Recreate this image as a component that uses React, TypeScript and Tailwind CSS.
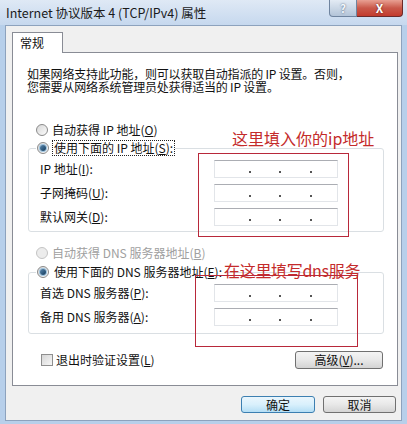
import React from "react";

const F = "font-['Noto_Sans_CJK_SC','Microsoft_YaHei',sans-serif]";

function Radio({ checked, disabled }: { checked?: boolean; disabled?: boolean }) {
  return (
    <span
      className={`inline-flex w-[12px] h-[12px] shrink-0 rounded-full border items-center justify-center ${
        disabled ? "border-[#c4c4c4] bg-[#ececec]" : "border-[#8a8a8a] bg-linear-to-br from-[#d8d8d8] to-[#fbfbfb]"
      }`}
    >
      {checked && (
        <span className="w-[6px] h-[6px] rounded-full bg-linear-to-br from-[#5c8ab0] to-[#0f3a5c] ring-1 ring-[#9cc3df]" />
      )}
    </span>
  );
}

function U({ c }: { c: string }) {
  return <span className="underline underline-offset-1">{c}</span>;
}

function IpBox() {
  return (
    <div className="w-[124px] h-[18px] bg-white border border-[#e2e5e9] border-t-[#abadb3] flex items-end pb-[4px]">
      <span className="w-[34px]" />
      <span className="w-[2px] h-[2px] bg-[#555]" />
      <span className="w-[28px]" />
      <span className="w-[2px] h-[2px] bg-[#555]" />
      <span className="w-[29px]" />
      <span className="w-[2px] h-[2px] bg-[#555]" />
    </div>
  );
}

function Row({ label, children }: { label: React.ReactNode; children?: React.ReactNode }) {
  return (
    <div className="flex items-center h-[18px]">
      <span className="w-[174px] text-[12px] leading-[14px] text-[#111]">{label}</span>
      {children}
    </div>
  );
}

export default function App() {
  return (
    <div className={`relative w-[407px] h-[424px] bg-[#b7cfea] flex flex-col overflow-hidden ${F}`}>
      {/* title bar */}
      <div className="h-[25px] flex justify-between items-start bg-linear-to-b from-[#dfe9f5] to-[#c6d8ee]">
        <span className="pl-[6px] pt-[4px] text-[12.5px] leading-[17px] text-[#1a1a1a]">
          Internet 协议版本 4 (TCP/IPv4) 属性
        </span>
        <div className="flex mr-[4px]">
          <div className="w-[28px] h-[17px] rounded-bl-[4px] border border-t-0 border-[#6f849f] bg-linear-to-b from-[#e3ebf4] to-[#b3c4d8] flex items-center justify-center text-[11px] leading-[12px] font-bold text-[#f4f8fc] [text-shadow:0_0_2px_#44566e]">
            ?
          </div>
          <div className="w-[46px] h-[17px] rounded-br-[4px] border border-t-0 border-l-0 border-[#6b2a2a] bg-linear-to-b from-[#e8a093] via-[#c9584a] to-[#c23a2c] flex items-center justify-center text-[12px] leading-[12px] font-bold text-white [text-shadow:0_0_2px_#5a1a12]">
            X
          </div>
        </div>
      </div>

      {/* client area */}
      <div className="mx-[5px] h-[396px] bg-[#f0f0f0] border border-[#8da2bd] flex flex-col">
        {/* tab */}
        <div className="pt-[6px] pl-[6px]">
          <div className="relative z-10 -mb-px w-[51px] h-[21px] bg-white border border-b-0 border-[#898c95] flex items-center pl-[7px] text-[12px] leading-[14px] text-[#111]">
            常规
          </div>
        </div>
        {/* panel */}
        <div className="ml-[6px] w-[386px] h-[334px] bg-white border border-[#898c95] flex flex-col pl-[15px] text-[12px] text-[#111]">
          <p className="mt-[14px] ml-[-1px] leading-[13px] tracking-[-0.2px] text-[12px]">
            如果网络支持此功能，则可以获取自动指派的 IP 设置。否则，
            <br />
            您需要从网络系统管理员处获得适当的 IP 设置。
          </p>

          <div className="mt-[29px] h-[16px] flex items-center gap-[4px] pl-[8px]">
            <Radio />
            <span className="leading-[14px]">
              自动获得 IP 地址(<U c="O" />)
            </span>
          </div>

          <fieldset className="mt-[2px] w-[356px] border border-[#dadfe3] rounded-[3px] px-0 pt-[4px] pb-[5px] flex flex-col gap-[6px]">
            <legend className="ml-[7px] px-[1px] h-[16px] flex items-center gap-[4px] bg-white">
              <Radio checked />
              <span className="leading-[14px] outline outline-1 outline-dotted outline-[#222] px-[1px]">
                使用下面的 IP 地址(<U c="S" />):
              </span>
            </legend>
            <div className="pl-[11px] flex flex-col gap-[6px]">
              <Row label={<>IP 地址(<U c="I" />):</>}>
                <IpBox />
              </Row>
              <Row label={<>子网掩码(<U c="U" />):</>}>
                <IpBox />
              </Row>
              <Row label={<>默认网关(<U c="D" />):</>}>
                <IpBox />
              </Row>
            </div>
          </fieldset>

          <div className="mt-[13px] h-[16px] flex items-center gap-[4px] pl-[8px] text-[#a0a0a0]">
            <Radio disabled />
            <span className="leading-[14px]">
              自动获得 DNS 服务器地址(<U c="B" />)
            </span>
          </div>

          <fieldset className="mt-[3px] w-[356px] border border-[#dadfe3] rounded-[3px] px-0 pt-[4px] pb-[7px]">
            <legend className="ml-[7px] px-[1px] h-[16px] flex items-center gap-[4px] bg-white">
              <Radio checked />
              <span className="leading-[14px] px-[1px]">
                使用下面的 DNS 服务器地址(<U c="E" />):
              </span>
            </legend>
            <div className="pl-[11px] flex flex-col gap-[6px]">
              <Row label={<>首选 DNS 服务器(<U c="P" />):</>}>
                <IpBox />
              </Row>
              <Row label={<>备用 DNS 服务器(<U c="A" />):</>}>
                <IpBox />
              </Row>
            </div>
          </fieldset>

          <div className="mt-[17px] h-[18px] w-[356px] flex items-center">
            <span className="ml-[13px] w-[12px] h-[12px] border border-[#8f8f8f] bg-linear-to-br from-[#d6d6d6] to-[#f7f7f7]" />
            <span className="ml-[3px] leading-[14px]">
              退出时验证设置(<U c="L" />)
            </span>
            <button className="ml-auto mr-[1px] w-[88px] h-[18px] rounded-[3px] border border-[#707070] bg-linear-to-b from-[#f4f4f4] via-[#e8e8e8] to-[#d4d4d4] text-[12px] leading-[14px] text-[#111]">
              高级(<U c="V" />)...
            </button>
          </div>
        </div>

        {/* bottom buttons */}
        <div className="mt-[10px] flex justify-end gap-[8px] pr-[5px]">
          <button className="w-[74px] h-[17px] rounded-[3px] border border-[#3c7fb1] bg-linear-to-b from-[#eaf6fd] via-[#d9f0fc] to-[#b4def5] text-[12px] leading-[14px] text-[#111]">
            确定
          </button>
          <button className="w-[73px] h-[17px] rounded-[3px] border border-[#707070] bg-linear-to-b from-[#f4f4f4] via-[#e8e8e8] to-[#d4d4d4] text-[12px] leading-[14px] text-[#111]">
            取消
          </button>
        </div>
      </div>

      {/* red annotations */}
      <div className="absolute left-[198px] top-[153px] w-[151px] h-[84px] border-[1.5px] border-[#b8283a]" />
      <div className="absolute left-[195px] top-[275px] w-[163px] h-[72px] border-[1.5px] border-[#b8283a]" />
      <span className="absolute left-[232px] top-[128px] text-[16px] leading-[20px] text-[#c42b2b]">
        这里填入你的ip地址
      </span>
      <span className="absolute left-[224px] top-[260px] text-[16px] leading-[20px] text-[#c42b2b] tracking-[-0.3px]">
        在这里填写dns服务
      </span>
    </div>
  );
}
